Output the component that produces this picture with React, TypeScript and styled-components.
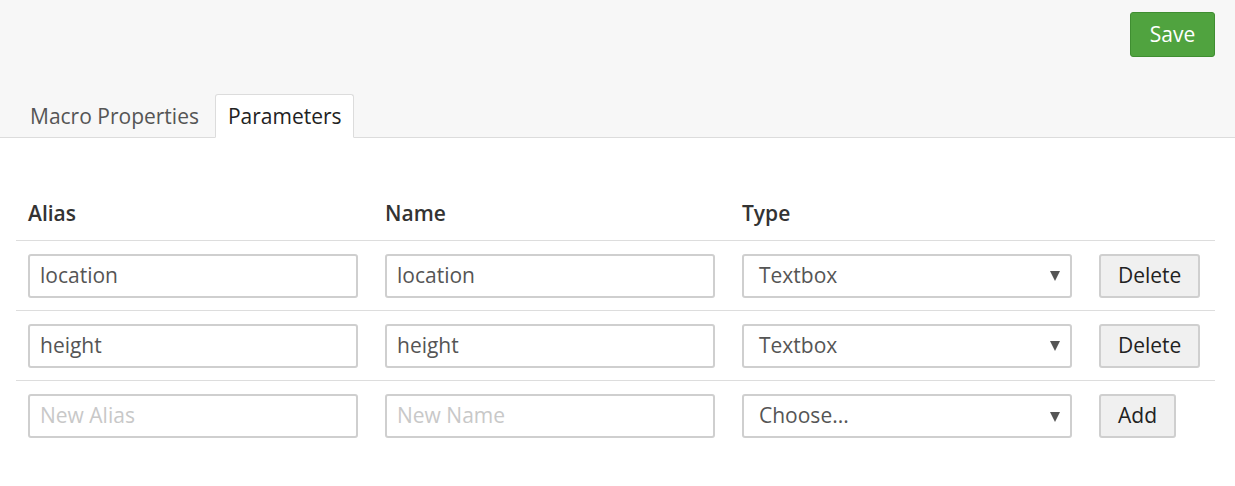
import React from "react";
import styled, { createGlobalStyle } from "styled-components";

const Global = createGlobalStyle`
  html, body { margin: 0; padding: 0; background: #fff; }
  body { font-family: "Open Sans", "Liberation Sans", sans-serif; color: #333; }
  * { box-sizing: border-box; }
`;

const Header = styled.div`
  background: #f7f7f7;
  height: 138px;
  display: flex;
  flex-direction: column;
  border-bottom: 1px solid #dcdcdc;
`;

const TopBar = styled.div`
  display: flex;
  justify-content: flex-end;
  padding: 12px 20px 0 0;
  height: 94px;
`;

const SaveButton = styled.button`
  width: 85px;
  height: 45px;
  background: #50a33f;
  border: 1px solid #3f8e31;
  border-radius: 3px;
  color: #fff;
  font-family: inherit;
  font-size: 21px;
  padding: 0 0 2px;
`;

const Tabs = styled.div`
  display: flex;
  align-items: flex-end;
  padding-left: 17px;
  gap: 4px;
  height: 43px;
`;

const Tab = styled.div<{ $active?: boolean }>`
  height: ${(p) => (p.$active ? "44px" : "43px")};
  margin-bottom: ${(p) => (p.$active ? "-1px" : "0")};
  padding: 0 11px 0 12px;
  display: flex;
  align-items: center;
  font-size: 21px;
  color: ${(p) => (p.$active ? "#222" : "#555")};
  background: ${(p) => (p.$active ? "#fff" : "transparent")};
  border: 1px solid ${(p) => (p.$active ? "#dcdcdc" : "transparent")};
  border-bottom-color: ${(p) => (p.$active ? "#fff" : "transparent")};
  border-radius: 3px 3px 0 0;
`;

const Table = styled.div`
  margin: 49px 20px 0 16px;
`;

const Row = styled.div<{ $head?: boolean; $last?: boolean }>`
  display: grid;
  grid-template-columns: 357px 357px 357px 1fr;
  align-items: center;
  height: ${(p) => (p.$head ? "54px" : "70px")};
  border-bottom: ${(p) => (p.$last ? "none" : "1px solid #dddddd")};
`;

const HeadCell = styled.div`
  padding-left: 12px;
  font-size: 21px;
  font-weight: 600;
  color: #333;
  padding-bottom: 2px;
`;

const Cell = styled.div`
  padding-left: 12px;
  display: flex;
`;

const Input = styled.input`
  width: 330px;
  height: 44px;
  border: 2px solid #cfcfcf;
  border-radius: 3px;
  padding: 0 10px 2px;
  font-family: inherit;
  font-size: 21px;
  color: #555;
  background: #fff;
  outline: none;
  &::placeholder { color: #c8c8c8; }
`;

const Select = styled.div`
  width: 330px;
  height: 44px;
  border: 2px solid #cfcfcf;
  border-radius: 3px;
  padding: 0 10px 2px 15px;
  font-size: 21px;
  color: #555;
  display: flex;
  align-items: center;
  justify-content: space-between;
`;

const Arrow = styled.span`
  width: 0;
  height: 0;
  border-left: 5px solid transparent;
  border-right: 5px solid transparent;
  border-top: 10px solid #555;
  margin-top: 3px;
`;

const GrayButton = styled.button`
  height: 44px;
  padding: 0 17px 2px;
  background: #f0f0f0;
  border: 2px solid #cfcfcf;
  border-radius: 3px;
  font-family: inherit;
  font-size: 21px;
  color: #222;
`;

type Param = { alias: string; name: string; type: string };
const params: Param[] = [
  { alias: "location", name: "location", type: "Textbox" },
  { alias: "height", name: "height", type: "Textbox" },
];

export default function App() {
  return (
    <>
      <Global />
      <Header>
        <TopBar>
          <SaveButton>Save</SaveButton>
        </TopBar>
        <Tabs>
          <Tab>Macro Properties</Tab>
          <Tab $active>Parameters</Tab>
        </Tabs>
      </Header>
      <Table>
        <Row $head>
          <HeadCell>Alias</HeadCell>
          <HeadCell>Name</HeadCell>
          <HeadCell>Type</HeadCell>
          <HeadCell />
        </Row>
        {params.map((p) => (
          <Row key={p.alias}>
            <Cell><Input defaultValue={p.alias} /></Cell>
            <Cell><Input defaultValue={p.name} /></Cell>
            <Cell><Select>{p.type}<Arrow /></Select></Cell>
            <Cell><GrayButton>Delete</GrayButton></Cell>
          </Row>
        ))}
        <Row $last>
          <Cell><Input placeholder="New Alias" /></Cell>
          <Cell><Input placeholder="New Name" /></Cell>
          <Cell><Select>Choose...<Arrow /></Select></Cell>
          <Cell><GrayButton>Add</GrayButton></Cell>
        </Row>
      </Table>
    </>
  );
}
